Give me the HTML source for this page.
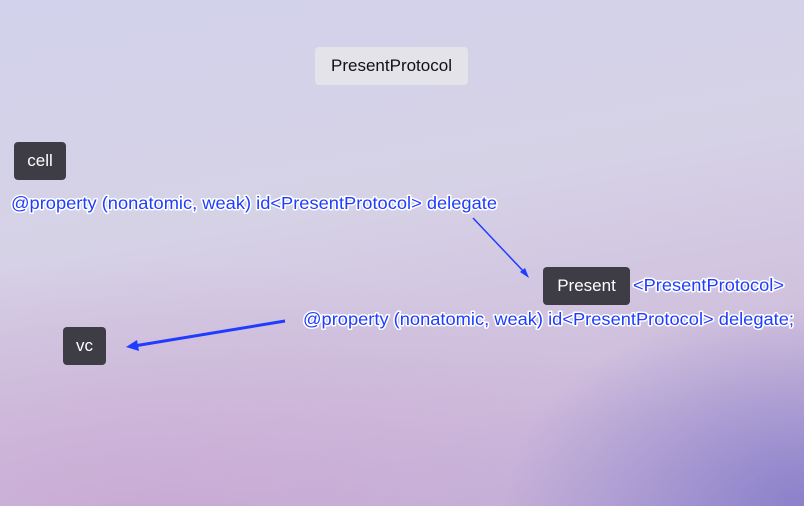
<!DOCTYPE html>
<html><head><style>
html,body{margin:0;padding:0}
body{width:804px;height:506px;overflow:hidden;position:relative;font-family:"Liberation Sans",sans-serif;
background:
radial-gradient(ellipse 300px 200px at 804px 506px, rgba(130,120,200,0.85), rgba(150,140,205,0) 100%),
radial-gradient(ellipse 600px 260px at 150px 520px, rgba(200,165,210,0.7), rgba(205,170,210,0) 100%),
linear-gradient(170deg,#d2d2ec 0%,#d6d2e6 40%,#cfbddc 75%,#bfaed8 100%);}
.box{position:absolute;border-radius:4px;color:#fff;font-size:17px;display:flex;align-items:center;justify-content:center;background:#3e3c44}
svg{position:absolute;left:0;top:0}
</style></head><body>
<div class="box" style="left:315px;top:47px;width:153px;height:38px;background:#e4e3ea;color:#111">PresentProtocol</div>
<div class="box" style="left:14px;top:142px;width:52px;height:38px">cell</div>
<div class="box" style="left:63px;top:327px;width:43px;height:38px">vc</div>
<div class="box" style="left:543px;top:267px;width:87px;height:38px">Present</div>
<svg width="804" height="506">
<g font-family="Liberation Sans, sans-serif" font-size="17.5" fill="#1f3cff" stroke="#fff" stroke-width="3" paint-order="stroke" stroke-linejoin="round">
<text x="11" y="209" textLength="486" lengthAdjust="spacingAndGlyphs">@property (nonatomic, weak) id&lt;PresentProtocol&gt; delegate</text>
<text x="633" y="291" textLength="151" lengthAdjust="spacingAndGlyphs">&lt;PresentProtocol&gt;</text>
<text x="303" y="325" textLength="491" lengthAdjust="spacingAndGlyphs">@property (nonatomic, weak) id&lt;PresentProtocol&gt; delegate;</text>
</g>
<line x1="473" y1="218" x2="526" y2="274" stroke="#1f3cff" stroke-width="1.5"/>
<polygon points="529,278 520,272 525,268" fill="#1f3cff"/>
<line x1="285" y1="321" x2="134" y2="346" stroke="#1f3cff" stroke-width="3"/>
<polygon points="126,347 137,340 139,351" fill="#1f3cff"/>
</svg>
</body></html>
